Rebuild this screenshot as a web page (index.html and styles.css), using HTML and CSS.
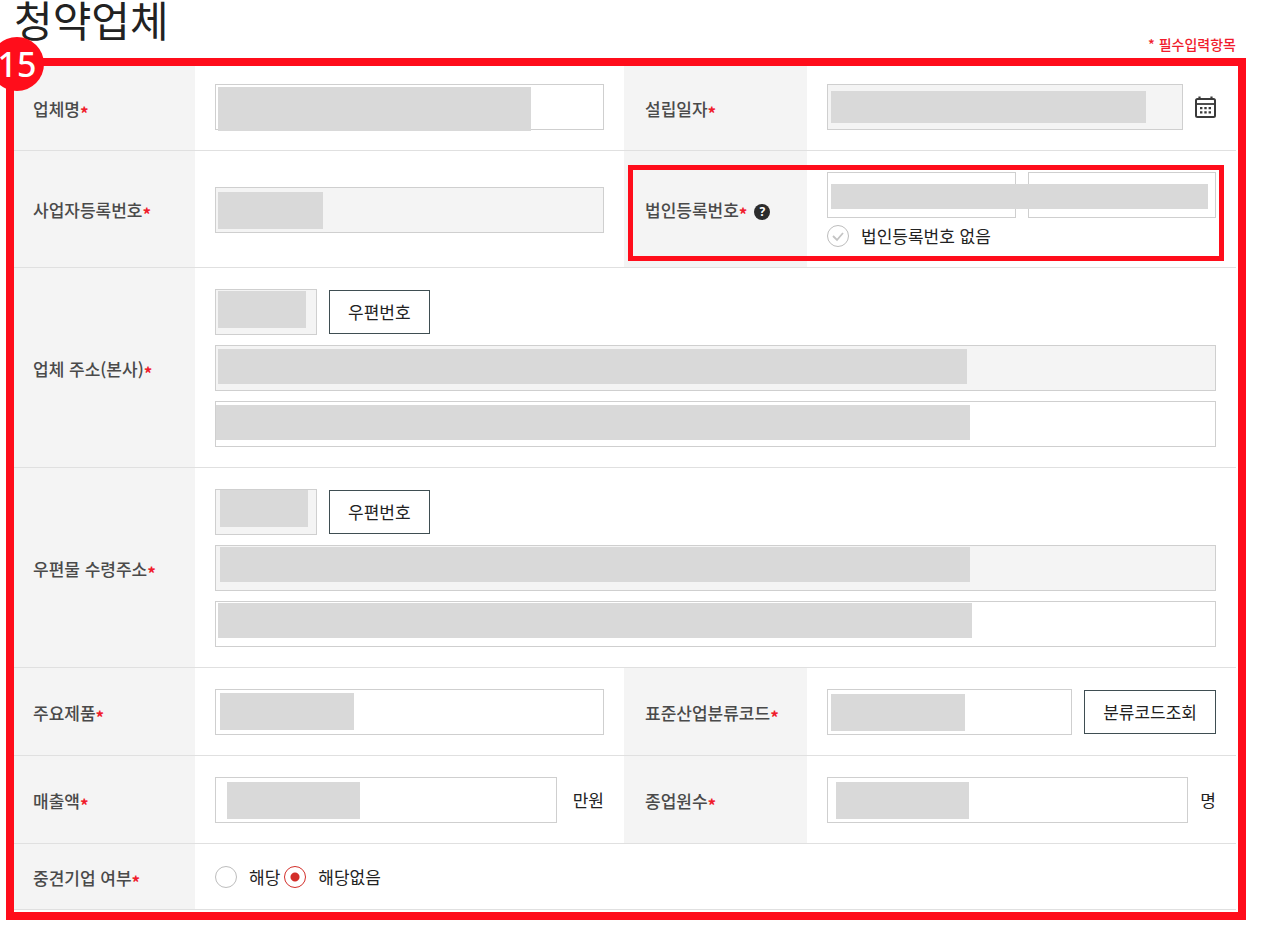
FILE: index.html
```html
<!DOCTYPE html>
<html lang="ko">
<head>
<meta charset="utf-8">
<meta name="viewport" content="width=device-width, initial-scale=1">
<title>청약업체</title>
<link rel="stylesheet" href="styles.css">
</head>
<body>
<header class="page-head">
  <h1 class="title">청약업체</h1>
  <p class="required-note">* 필수입력항목</p>
</header>

<form class="panel">
  <span class="step">15</span>

  <div class="row row-first">
    <div class="head"><label for="company">업체명</label><span class="star">*</span></div>
    <div class="cell">
      <div class="line">
        <div class="field"><input class="box" id="company" type="text"><span class="mask mask-company"></span></div>
      </div>
    </div>
    <div class="head"><label for="founded">설립일자</label><span class="star">*</span></div>
    <div class="cell">
      <div class="line">
        <div class="field"><input class="box" id="founded" type="text" readonly><span class="mask mask-founded"></span></div>
        <button class="calendar" type="button" aria-label="날짜 선택">
          <svg width="21" height="22" viewBox="0 0 21 22" fill="none" stroke="#3a3a3a">
            <rect x="1" y="3" width="19" height="18" rx="1.5" stroke-width="2"/>
            <path d="M1 8h19" stroke-width="1.8"/>
            <path d="M4.5 0.5v3M16.5 0.5v3" stroke-width="2.2"/>
            <path d="M5 12.2h2.4M9.3 12.2h2.4M13.6 12.2H16M5 16.4h2.4M9.3 16.4h2.4M13.6 16.4H16" stroke-width="2.2"/>
          </svg>
        </button>
      </div>
    </div>
  </div>

  <div class="row">
    <div class="head"><label for="bizno">사업자등록번호</label><span class="star">*</span></div>
    <div class="cell">
      <div class="line">
        <div class="field"><input class="box" id="bizno" type="text" readonly><span class="mask mask-bizno"></span></div>
      </div>
    </div>
    <div class="head"><label for="corpno">법인등록번호</label><span class="star">*</span>
      <button class="help" type="button" aria-label="도움말">?</button>
    </div>
    <div class="cell">
      <div class="line field">
        <input class="box" id="corpno" type="text">
        <input class="box" type="text" aria-label="법인등록번호 뒷자리">
        <span class="mask mask-corpno"></span>
      </div>
      <label class="choice choice-check"><input class="check" type="checkbox">
        <svg class="tick" width="22" height="22" viewBox="0 0 22 22" fill="none" stroke="#c4c4c4" stroke-width="1.8"><path d="M6 11l4 4 6-7"/></svg>
        <span>법인등록번호 없음</span></label>
    </div>
    <span class="highlight"></span>
  </div>

  <div class="row">
    <div class="head"><label for="zip1">업체 주소(본사)</label><span class="star">*</span></div>
    <div class="cell cell-wide">
      <div class="line">
        <div class="field field-zip"><input class="box" id="zip1" type="text" readonly><span class="mask mask-zip1"></span></div>
        <button class="button" type="button">우편번호</button>
      </div>
      <div class="field"><input class="box" type="text" aria-label="업체 주소" readonly><span class="mask mask-addr1"></span></div>
      <div class="field"><input class="box" type="text" aria-label="업체 상세주소"><span class="mask mask-detail1"></span></div>
    </div>
  </div>

  <div class="row">
    <div class="head"><label for="zip2">우편물 수령주소</label><span class="star">*</span></div>
    <div class="cell cell-wide">
      <div class="line">
        <div class="field field-zip"><input class="box" id="zip2" type="text" readonly><span class="mask mask-zip2"></span></div>
        <button class="button" type="button">우편번호</button>
      </div>
      <div class="field"><input class="box" type="text" aria-label="수령 주소" readonly><span class="mask mask-addr2"></span></div>
      <div class="field"><input class="box" type="text" aria-label="수령 상세주소"><span class="mask mask-detail2"></span></div>
    </div>
  </div>

  <div class="row">
    <div class="head"><label for="product">주요제품</label><span class="star">*</span></div>
    <div class="cell">
      <div class="line">
        <div class="field"><input class="box" id="product" type="text"><span class="mask mask-product"></span></div>
      </div>
    </div>
    <div class="head"><label for="code">표준산업분류코드</label><span class="star">*</span></div>
    <div class="cell">
      <div class="line">
        <div class="field"><input class="box" id="code" type="text"><span class="mask mask-code"></span></div>
        <button class="button" type="button">분류코드조회</button>
      </div>
    </div>
  </div>

  <div class="row">
    <div class="head"><label for="sales">매출액</label><span class="star">*</span></div>
    <div class="cell">
      <div class="line line-unit">
        <div class="field"><input class="box" id="sales" type="text"><span class="mask mask-sales"></span></div>
        <span>만원</span>
      </div>
    </div>
    <div class="head"><label for="staff">종업원수</label><span class="star">*</span></div>
    <div class="cell">
      <div class="line">
        <div class="field"><input class="box" id="staff" type="text"><span class="mask mask-staff"></span></div>
        <span>명</span>
      </div>
    </div>
  </div>

  <div class="row" role="radiogroup" aria-labelledby="midsize">
    <div class="head"><span id="midsize">중견기업 여부</span><span class="star">*</span></div>
    <div class="cell cell-wide">
      <div class="choices">
        <label class="choice"><input class="radio" type="radio" name="midsize"><span>해당</span></label>
        <label class="choice"><input class="radio" type="radio" name="midsize" checked><span>해당없음</span></label>
      </div>
    </div>
  </div>
</form>
</body>
</html>
```
FILE: styles.css
```css
* { box-sizing: border-box; }

body {
  margin: 0;
  background: #fff;
  color: #222;
  font: 17px/24px "Noto Sans CJK KR", "Noto Sans", sans-serif;
}

.page-head {
  display: flex;
  justify-content: space-between;
  align-items: flex-end;
  height: 58px;
  padding: 0 26px 0 14px;
}

.title {
  align-self: flex-start;
  margin: 0;
  font-size: 42px;
  line-height: 38px;
  font-weight: 400;
}

.required-note {
  margin: 0;
  color: #f01c2c;
  font-size: 14px;
  font-weight: 500;
  line-height: 28px;
}

.panel {
  position: relative;
  margin: 0 16px 8px 6px;
  padding: 0 2px 2px 0;
  border: 8px solid #ff0d1b;
}

.step {
  position: absolute;
  top: -29px;
  left: -24px;
  z-index: 2;
  width: 54px;
  height: 54px;
  border-radius: 50%;
  background: #ff0d1b;
  color: #fff;
  font: 500 34px/54px "Noto Sans", sans-serif;
  text-align: center;
}

.row {
  position: relative;
  display: grid;
  grid-template-columns: 181px 1fr 183px 1fr;
  border-bottom: 1px solid #e0e0e0;
}

.head {
  display: flex;
  align-items: center;
  padding: 2px 0 0 19px;
  background: #f4f4f4;
  color: #4a4a4a;
  font-weight: 500;
  white-space: nowrap;
}

.row .head:nth-child(3) { padding-left: 21px; }

.star {
  padding-top: 8px;
  color: #f01c2c;
  font-size: 17px;
  font-weight: 700;
}

.help {
  width: 16px;
  height: 16px;
  margin: 4px 0 0 7px;
  padding: 0;
  border: 0;
  border-radius: 50%;
  background: #2c2c2c;
  color: #fff;
  font: bold 12px/16px "Noto Sans", sans-serif;
}

.cell {
  display: flex;
  flex-direction: column;
  justify-content: center;
  gap: 10px;
  min-width: 0;
  padding: 21px 20px 20px;
}

.row-first .cell { padding-top: 18px; }
.cell-wide { grid-column: 2 / -1; }

.line {
  display: flex;
  align-items: center;
  gap: 12px;
}

.line-unit { gap: 16px; }

.field {
  position: relative;
  flex: 1 1 auto;
  min-width: 0;
}

.line.field { flex: none; }

.field-zip { flex: 0 0 102px; }

.box {
  display: block;
  width: 100%;
  min-width: 0;
  height: 46px;
  padding: 0 12px;
  border: 1px solid #cfcfcf;
  border-radius: 0;
  background: #fff;
  font: inherit;
}

.box:read-only { background: #f4f4f4; }

.button {
  height: 44px;
  padding: 0 18px;
  border: 1px solid #3f4e52;
  background: #fff;
  color: #222;
  font: inherit;
  white-space: nowrap;
}

.calendar {
  display: flex;
  padding: 0;
  border: 0;
  background: none;
}

.mask {
  position: absolute;
  max-width: 98%;
  height: 37px;
  background: #d9d9d9;
}

.mask-company { top: 3px; left: 3px; width: 313px; height: 44px; }
.mask-founded { top: 7px; left: 4px; width: 315px; height: 32px; }
.mask-bizno { top: 5px; left: 3px; width: 105px; }
.mask-corpno { top: 12px; left: 4px; width: 377px; height: 25px; }
.mask-zip1 { top: 2px; left: 3px; width: 88px; }
.mask-addr1 { top: 4px; left: 3px; width: 749px; height: 35px; }
.mask-detail1 { top: 4px; left: 1px; width: 754px; height: 35px; }
.mask-zip2 { top: 1px; left: 5px; width: 88px; }
.mask-addr2 { top: 2px; left: 5px; width: 750px; height: 35px; }
.mask-detail2 { top: 2px; left: 3px; width: 754px; height: 35px; }
.mask-product { top: 4px; left: 5px; width: 134px; }
.mask-code { top: 5px; left: 4px; width: 134px; }
.mask-sales { top: 5px; left: 12px; width: 133px; }
.mask-staff { top: 5px; left: 9px; width: 133px; }

.highlight {
  position: absolute;
  top: 14px;
  right: 12px;
  bottom: 6px;
  left: calc(50% + 3px);
  border: 5px solid #ff0d1b;
  pointer-events: none;
}

.choices {
  display: flex;
  gap: 4px;
}

.choice {
  position: relative;
  display: flex;
  align-items: center;
  gap: 12px;
}

.choice-check {
  height: 22px;
  margin-top: -3px;
}

.check,
.radio {
  appearance: none;
  flex: none;
  width: 22px;
  height: 22px;
  margin: 0;
  border: 1px solid #bdbdbd;
  border-radius: 50%;
  background: #fff;
}

.radio:checked {
  border-color: #d32f2a;
  background: radial-gradient(circle, #d32f2a 4px, #fff 5px);
}

.tick {
  position: absolute;
  top: 0;
  left: 0;
}
```
